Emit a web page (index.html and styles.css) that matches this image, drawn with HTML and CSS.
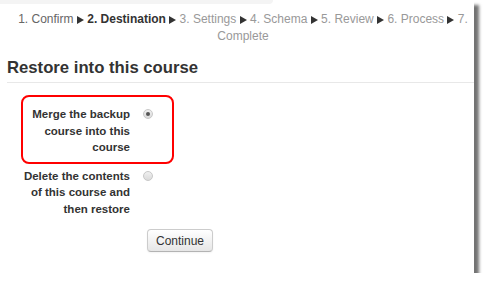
FILE: index.html
```html
<!DOCTYPE html>
<html lang="en">
<head>
    <meta charset="UTF-8">
    <title>Restore</title>
    <link rel="stylesheet" href="styles.css">
</head>
<body>
    <div class="frame">
        <div class="topbar"></div>
        <div class="progress">
            <span class="done">1. Confirm</span> <span class="sep"></span>
            <span class="current">2. Destination</span> <span class="sep"></span>
            <span class="todo">3. Settings</span> <span class="sep"></span>
            <span class="todo">4. Schema</span> <span class="sep"></span>
            <span class="todo">5. Review</span> <span class="sep"></span>
            <span class="todo">6. Process</span> <span class="sep"></span>
            <span class="todo">7. Complete</span>
        </div>

        <h2 class="heading">Restore into this course</h2>

        <form class="restore">
            <div class="fitem picked">
                <label class="flabel" for="merge">Merge the backup course into this course</label>
                <input type="radio" class="fradio" name="target" id="merge" checked>
            </div>
            <div class="fitem">
                <label class="flabel" for="wipe">Delete the contents of this course and then restore</label>
                <input type="radio" class="fradio" name="target" id="wipe">
            </div>
            <div class="actions">
                <button type="button" class="btn">Continue</button>
            </div>
        </form>
    </div>
</body>
</html>
```

FILE: styles.css
```css
* {
    padding: 0;
    margin: 0;
    box-sizing: border-box;
}

body {
    background-color: #ffffff;
    font-family: "Liberation Sans", Arial, sans-serif;
    color: #333333;
}

.frame {
    width: 474px;
    height: 273px;
    background-color: #ffffff;
    box-shadow: 5px 5px 3px rgba(0, 0, 0, 0.55);
}

.topbar {
    width: 273px;
    height: 4px;
    background-color: #f4f4f4;
    border-bottom-right-radius: 4px;
}

.progress {
    width: 470px;
    margin: 7px 0 0 8px;
    font-size: 12px;
    line-height: 17px;
    text-align: center;
    color: #999999;
}

.progress .done {
    color: #666666;
}

.progress .current {
    color: #333333;
    font-weight: bold;
}

/* little play-arrow between steps */
.progress .sep {
    display: inline-block;
    width: 0;
    height: 0;
    border-left: 7px solid #333333;
    border-top: 4px solid transparent;
    border-bottom: 4px solid transparent;
    vertical-align: -1px;
}

.heading {
    margin: 13px 0 0 7px;
    padding-bottom: 4px;
    font-size: 16.7px;
    line-height: 20px;
    color: #333333;
    border-bottom: 1px solid #e8e8e8;
}

.restore {
    padding-top: 12px;
}

.fitem {
    display: flex;
    align-items: flex-start;
    margin-left: 23px;
    width: 153px;
}

.fitem.picked {
    margin-left: 21px;
    border: 2px solid #ff0000;
    border-radius: 8px;
    padding: 9px 0 6px 0;
    margin-bottom: 4px;
}

.flabel {
    width: 107px;
    text-align: right;
    font-size: 11.5px;
    font-weight: bold;
    line-height: 16.5px;
    color: #333333;
}

.fradio {
    appearance: none;
    -webkit-appearance: none;
    width: 10px;
    height: 10px;
    margin: 3px 0 0 13px;
    border: 1px solid #c8c8c8;
    border-radius: 50%;
    background: linear-gradient(#f0f0f0, #dadada);
    position: relative;
    flex-shrink: 0;
}

.fradio:checked::after {
    content: "";
    position: absolute;
    left: 2px;
    top: 2px;
    width: 4px;
    height: 4px;
    border-radius: 50%;
    background-color: #555555;
}

.actions {
    padding: 12px 0 0 147px;
}

.btn {
    width: 66px;
    height: 23px;
    font-family: "Liberation Sans", Arial, sans-serif;
    font-size: 12px;
    color: #333333;
    background: linear-gradient(#ffffff, #e6e6e6);
    border: 1px solid #cccccc;
    border-bottom-color: #b3b3b3;
    border-radius: 4px;
    box-shadow: 0 1px 2px rgba(0, 0, 0, 0.05);
}
```
